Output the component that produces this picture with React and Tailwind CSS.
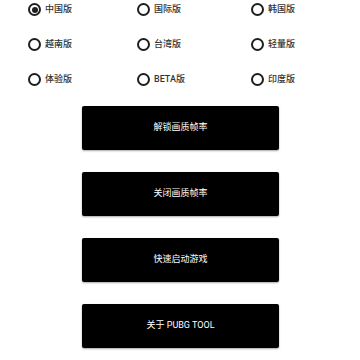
import React, { useState } from 'react';

const VERSIONS = ['中国版', '国际版', '韩国版', '越南版', '台湾版', '轻量版', '体验版', 'BETA版', '印度版'];
const ACTIONS = ['解锁画质帧率', '关闭画质帧率', '快速启动游戏', '关于 PUBG TOOL'];

const font = { fontFamily: '"Roboto", "Noto Sans CJK SC", sans-serif' };

function Radio({ label, checked, onSelect }) {
    return (
        <button onClick={onSelect} className="flex items-center gap-[3px] h-[13px] text-left">
            <span className="w-[13px] h-[13px] rounded-full border-2 border-[#1e1e1e] flex items-center justify-center shrink-0">
                {checked && <span className="w-[6px] h-[6px] rounded-full bg-[#1e1e1e]"></span>}
            </span>
            <span className="text-[9px] leading-none text-[#333] font-medium ml-[1px]">{label}</span>
        </button>
    );
}

export default function App() {
    const [selected, setSelected] = useState('中国版');

    return (
        <div className="w-[360px] h-[360px] bg-white overflow-hidden" style={font}>
            <div className="grid grid-cols-[109px_114px_1fr] gap-y-[22px] pt-[3px] pl-[28px]">
                {VERSIONS.map(v => (
                    <Radio key={v} label={v} checked={selected === v} onSelect={() => setSelected(v)} />
                ))}
            </div>

            <div className="flex flex-col items-center gap-[22px] mt-[20px] pl-[1px]">
                {ACTIONS.map(a => (
                    <button
                        key={a}
                        className="w-[197px] h-[44px] bg-black rounded-[2px] text-white text-[9px] shadow-[0_1px_2px_rgba(0,0,0,0.35)]"
                    >
                        {a}
                    </button>
                ))}
            </div>
        </div>
    );
}
